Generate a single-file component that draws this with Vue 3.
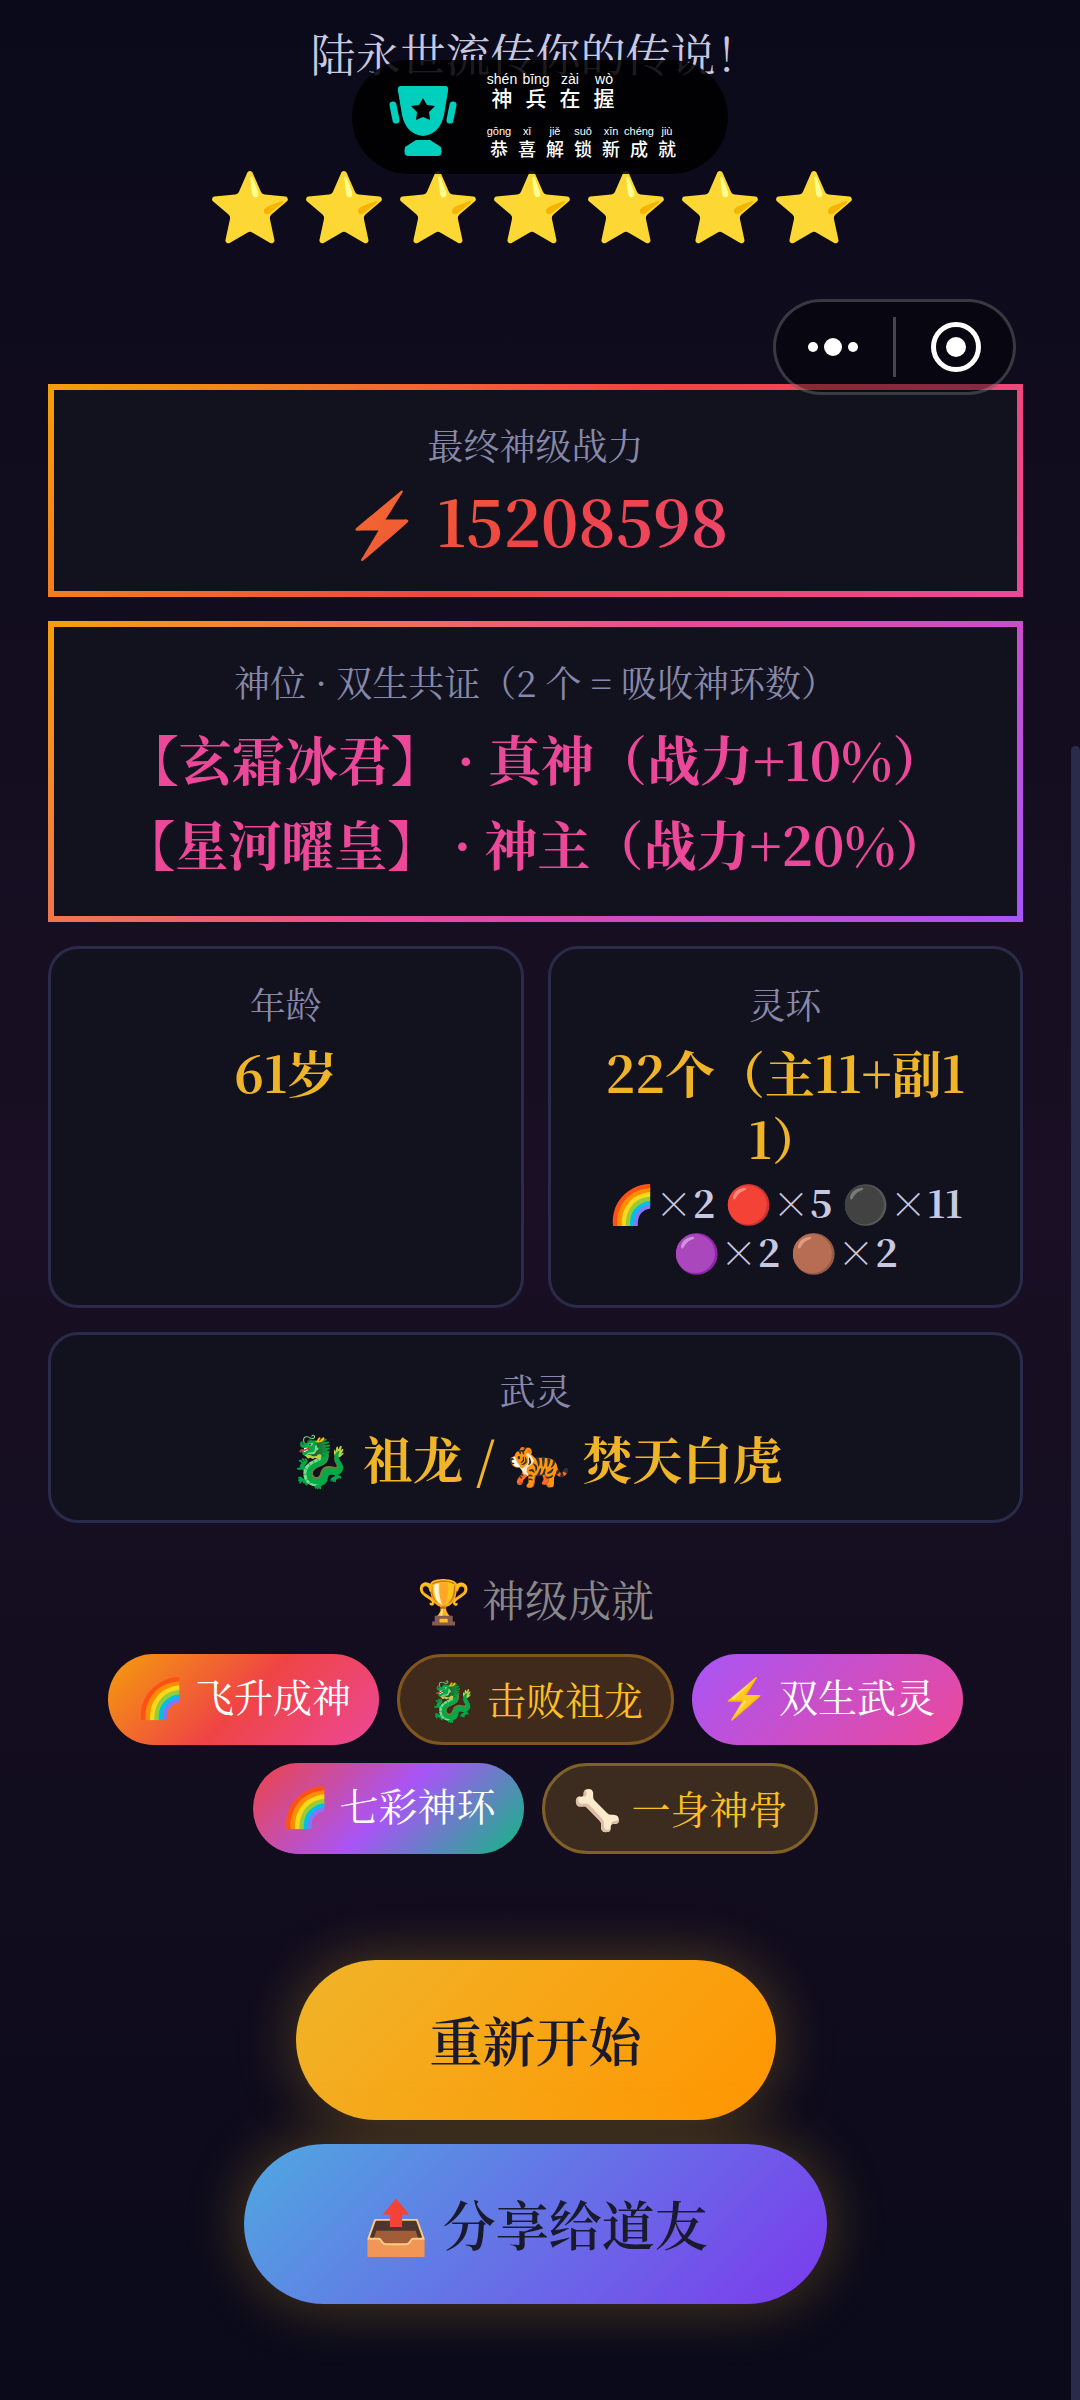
<template>
  <div class="page">
    <main class="result">
      <p class="legend">陆永世流传你的传说！</p>
      <div class="stars">
        <span v-for="n in 7" :key="n" class="star">⭐</span>
      </div>

      <section class="stats">
        <div class="card framed power">
          <div class="label">最终神级战力</div>
          <div class="value power-value">⚡ 15208598</div>
        </div>

        <div class="card framed throne">
          <div class="label">神位 · 双生共证（2 个 = 吸收神环数）</div>
          <div v-for="god in gods" :key="god" class="value god">{{ god }}</div>
        </div>

        <div class="card">
          <div class="label">年龄</div>
          <div class="value">61岁</div>
        </div>

        <div class="card">
          <div class="label">灵环</div>
          <div class="value">22个（主11+副11）</div>
          <div class="rings">
            <template v-for="ring in rings" :key="ring.icon">
              <span class="ring">{{ ring.icon }}×<b>{{ ring.count }}</b></span>{{ ' ' }}
            </template>
          </div>
        </div>

        <div class="card wide">
          <div class="label">武灵</div>
          <div class="value">🐉 祖龙 / 🐅 焚天白虎</div>
        </div>
      </section>

      <h2 class="heading">🏆 神级成就</h2>
      <div class="tags">
        <span v-for="tag in tags" :key="tag.text" class="tag" :class="tag.type">
          {{ tag.icon }} {{ tag.text }}
        </span>
      </div>

      <div class="actions">
        <button type="button" class="btn restart">重新开始</button>
        <button type="button" class="btn share">📤 分享给道友</button>
      </div>
    </main>

    <div class="scrollbar"></div>

    <div class="toast">
      <svg class="cup" viewBox="0 0 68 70">
        <path fill="#00cfbd" d="M12 0h44q4 0 3 5l-4 24q-4 19-21 21q-17-2-21-21L9 5q-1-5 3-5z" />
        <path fill="#000" d="M34 12l4 7 8 1-6 6 1 8-7-3-7 3 1-8-6-6 8-1z" />
        <path stroke="#00cfbd" stroke-width="7" stroke-linecap="round" d="M4 19l3 15M64 19l-3 15" />
        <path fill="#00cfbd" d="M27 54h14l11 7q2 9-3 9H19q-5 0-3-9z" />
      </svg>
      <div class="toast-text">
        <div class="line big">
          <span v-for="item in toastTitle" :key="item[1]" class="syllable">
            <small>{{ item[0] }}</small>{{ item[1] }}
          </span>
        </div>
        <div class="line">
          <span v-for="item in toastBody" :key="item[1]" class="syllable">
            <small>{{ item[0] }}</small>{{ item[1] }}
          </span>
        </div>
      </div>
    </div>

    <div class="capsule">
      <button type="button" aria-label="更多">
        <svg width="50" height="50" viewBox="0 0 50 50" fill="#fff">
          <circle cx="5" cy="25" r="5" />
          <circle cx="25" cy="25" r="9" />
          <circle cx="45" cy="25" r="5" />
        </svg>
      </button>
      <button type="button" aria-label="关闭">
        <svg width="50" height="50" viewBox="0 0 50 50">
          <circle cx="25" cy="25" r="22.5" fill="none" stroke="#fff" stroke-width="5" />
          <circle cx="25" cy="25" r="10" fill="#fff" />
        </svg>
      </button>
    </div>
  </div>
</template>

<script setup>
const gods = ['【玄霜冰君】 · 真神（战力+10%）', '【星河曜皇】 · 神主（战力+20%）']

const rings = [
  { icon: '🌈', count: 2 },
  { icon: '🔴', count: 5 },
  { icon: '⚫', count: 11 },
  { icon: '🟣', count: 2 },
  { icon: '🟤', count: 2 }
]

const tags = [
  { icon: '🌈', text: '飞升成神', type: 'ascend' },
  { icon: '🐉', text: '击败祖龙', type: 'boss' },
  { icon: '⚡', text: '双生武灵', type: 'twin' },
  { icon: '🌈', text: '七彩神环', type: 'rainbow' },
  { icon: '🦴', text: '一身神骨', type: 'bone' }
]

const toastTitle = [
  ['shén', '神'],
  ['bīng', '兵'],
  ['zài', '在'],
  ['wò', '握']
]

const toastBody = [
  ['gōng', '恭'],
  ['xǐ', '喜'],
  ['jiě', '解'],
  ['suǒ', '锁'],
  ['xīn', '新'],
  ['chéng', '成'],
  ['jiù', '就']
]
</script>

<style>
body {
  margin: 0;
  background: #0a0a1a;
}
</style>

<style scoped>
.page {
  position: relative;
  display: grid;
  grid-template-columns: 1fr 9px;
  min-height: 100vh;
  background: linear-gradient(180deg, #0a0a1a 0%, #1a0f24 50%, #0a0a1a 100%);
  font-family: 'Noto Serif CJK SC', 'Noto Serif SC', 'Source Han Serif SC', 'Liberation Serif', 'Noto Sans CJK SC', serif;
  color: #c8c8e0;
  text-align: center;
}

.result {
  padding: 18px 48px 96px;
}

.legend {
  margin: 0;
  font-size: 45px;
  line-height: 70px;
}

.stars {
  display: flex;
  justify-content: center;
  margin-top: 73px;
  font-size: 69px;
  line-height: 84px;
}

.star {
  margin-right: 8px;
}

.stats {
  display: grid;
  grid-template-columns: 1fr 1fr;
  gap: 24px;
  margin-top: 139px;
}

.card {
  padding: 28px 42px 30px;
  background: #12121e;
  border: 3px solid #2a2a4a;
  border-radius: 30px;
}

.framed,
.wide {
  grid-column: 1 / -1;
}

.framed {
  border: 6px solid;
  border-radius: 0;
}

.power {
  border-image: linear-gradient(135deg, #f59e0b, #ef4444, #ec4899) 1;
}

.throne {
  border-image: linear-gradient(135deg, #f59e0b, #ec4899, #a855f7) 1;
}

.label {
  margin-bottom: 7px;
  font-size: 36px;
  line-height: 54px;
  color: #8888aa;
}

.value {
  font-size: 50px;
  font-weight: bold;
  line-height: 66px;
  color: #f0b429;
  word-break: break-all;
}

.power-value {
  font-size: 63px;
  line-height: 82px;
  background: linear-gradient(135deg, #f59e0b, #ef4444, #ec4899);
  -webkit-background-clip: text;
  background-clip: text;
  color: transparent;
}

.god {
  font-size: 53px;
  line-height: 85px;
  color: #ec4899;
}

.rings {
  margin-top: 7px;
  font-size: 38px;
  line-height: 49px;
}

.ring {
  white-space: nowrap;
}

.heading {
  margin: 46px 0 25px;
  font-size: 43px;
  font-weight: normal;
  line-height: 60px;
  color: #888;
}

.tags {
  display: flex;
  flex-wrap: wrap;
  justify-content: center;
  gap: 18px;
}

.tag {
  padding: 14px 28px 22px;
  border-radius: 48px;
  font-size: 39px;
  line-height: 55px;
  color: #fff;
}

.ascend {
  background: linear-gradient(135deg, #f59e0b, #ef4444, #ec4899);
}

.twin {
  background: linear-gradient(135deg, #a855f7, #ec4899);
}

.rainbow {
  background: linear-gradient(135deg, #ef4444, #a855f7, #10b981);
}

.boss,
.bone {
  padding-bottom: 16px;
  border: 3px solid #80561f;
  background: #3f2a1c;
  color: #fbbf24;
}

.bone {
  border-color: #80602a;
  background: #3c2c20;
}

.actions {
  display: flex;
  flex-direction: column;
  align-items: center;
  gap: 24px;
  margin-top: 106px;
}

.btn {
  padding: 39px 134px 41px;
  border: none;
  border-radius: 80px;
  font-family: inherit;
  font-size: 53px;
  font-weight: 600;
  line-height: 80px;
  color: #1a1a2e;
  box-shadow: 0 0 60px rgba(240, 180, 41, 0.3);
  cursor: pointer;
}

.restart {
  background: linear-gradient(135deg, #f0b429, #ff9500);
}

.share {
  padding-right: 119px;
  padding-left: 119px;
  background: linear-gradient(135deg, #4fa8e0, #7c3aed);
}

.scrollbar {
  margin-top: 746px;
  border-radius: 5px 5px 0 0;
  background: #2a2a4a;
}

.toast {
  position: absolute;
  top: 60px;
  left: 50%;
  display: flex;
  align-items: center;
  gap: 28px;
  box-sizing: border-box;
  width: 376px;
  height: 114px;
  padding: 7px 0 0 37px;
  border-radius: 57px;
  background: rgba(0, 0, 0, 0.86);
  color: #fff;
  font-family: 'Noto Sans CJK SC', sans-serif;
  font-weight: 500;
  transform: translateX(-50%);
}

.cup {
  width: 68px;
  height: 70px;
  fill: none;
}

.toast-text {
  display: flex;
  flex-direction: column;
  gap: 16px;
  margin-bottom: 12px;
}

.line {
  display: flex;
  font-size: 18px;
  line-height: 18px;
}

.syllable {
  display: flex;
  flex-direction: column;
  align-items: center;
  width: 28px;
}

.syllable small {
  font-family: 'Liberation Sans', sans-serif;
  font-size: 11px;
  line-height: 15px;
}

.big {
  font-size: 21px;
  line-height: 21px;
}

.big .syllable {
  width: 34px;
}

.big small {
  font-size: 14px;
}

.capsule {
  position: absolute;
  top: 299px;
  right: 64px;
  display: flex;
  align-items: center;
  box-sizing: border-box;
  width: 243px;
  height: 96px;
  border: 3px solid rgba(255, 255, 255, 0.2);
  border-radius: 48px;
  background: rgba(0, 0, 0, 0.42);
}

.capsule button {
  flex: 1;
  height: 60px;
  padding: 5px 3px 5px 0;
  border: none;
  background: none;
  cursor: pointer;
}

.capsule button + button {
  padding: 5px 0 5px 3px;
  border-left: 3px solid rgba(255, 255, 255, 0.25);
}

.capsule svg {
  display: block;
  margin: 0 auto;
}
</style>
